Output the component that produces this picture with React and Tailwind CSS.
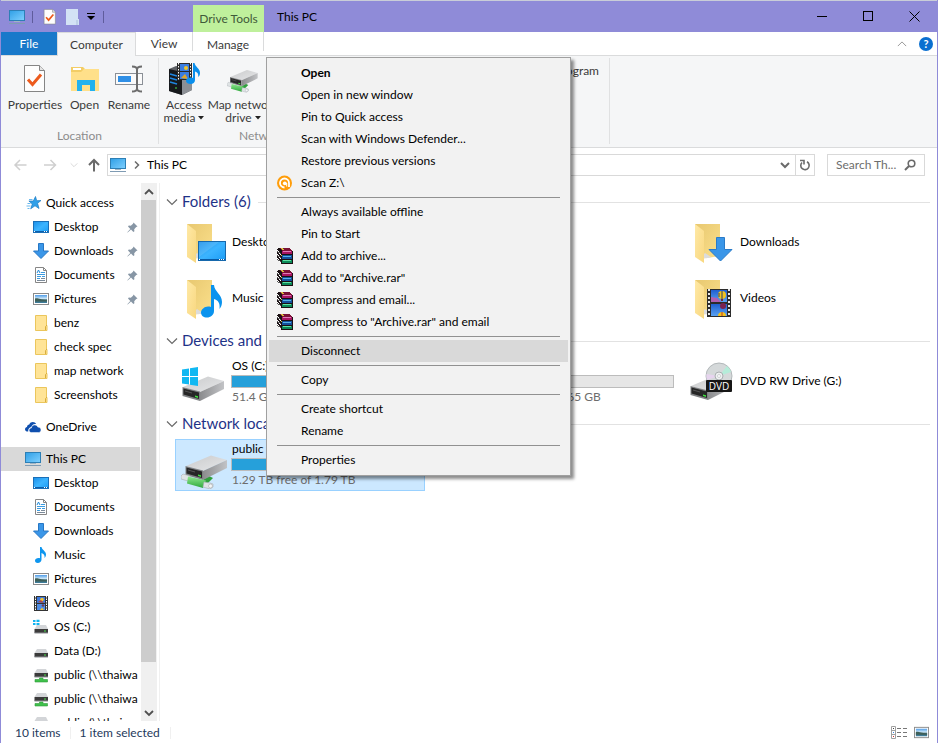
import React from "react";

const Defs = () => (
  <svg width="0" height="0" className="absolute" aria-hidden="true">
    <defs>
      <linearGradient id="screen" x1="0" y1="0" x2="1" y2="1">
        <stop offset="0" stopColor="#1a8fe8" />
        <stop offset="0.5" stopColor="#3cb4ff" />
        <stop offset="1" stopColor="#1b9cf5" />
      </linearGradient>
      <linearGradient id="monitor" x1="0" y1="0" x2="1" y2="1">
        <stop offset="0" stopColor="#2f9fe6" />
        <stop offset="1" stopColor="#7fd0ff" />
      </linearGradient>
      <linearGradient id="folderBack" x1="0" y1="0" x2="1" y2="1">
        <stop offset="0" stopColor="#e8c870" />
        <stop offset="1" stopColor="#fbe08c" />
      </linearGradient>
      <linearGradient id="folderFront" x1="0" y1="0" x2="1" y2="1">
        <stop offset="0" stopColor="#ffe9a6" />
        <stop offset="1" stopColor="#f8d77f" />
      </linearGradient>
      <linearGradient id="driveTop" x1="0" y1="0" x2="1" y2="1">
        <stop offset="0" stopColor="#c9cacb" />
        <stop offset="1" stopColor="#e6e7e9" />
      </linearGradient>
      <linearGradient id="driveSide" x1="0" y1="0" x2="1" y2="0">
        <stop offset="0" stopColor="#8b8c8e" />
        <stop offset="1" stopColor="#c2c3c6" />
      </linearGradient>
      <linearGradient id="sky" x1="0" y1="0" x2="0" y2="1">
        <stop offset="0" stopColor="#4f9ce8" />
        <stop offset="0.45" stopColor="#cfe8f7" />
        <stop offset="0.6" stopColor="#47707a" />
        <stop offset="1" stopColor="#3d7fa0" />
      </linearGradient>
      <linearGradient id="cable" x1="0" y1="0" x2="0" y2="1">
        <stop offset="0" stopColor="#8fe88f" />
        <stop offset="1" stopColor="#2fa83c" />
      </linearGradient>
      <linearGradient id="balloonSky" x1="0" y1="0" x2="0" y2="1">
        <stop offset="0" stopColor="#1f5fd0" />
        <stop offset="1" stopColor="#5aa2f2" />
      </linearGradient>
    </defs>
  </svg>
);

const MonitorIcon = ({ className = "w-4 h-4" }) => (
  <svg viewBox="0 0 16 16" className={`shrink-0 ${className}`}>
    <rect x="0.5" y="1.5" width="15" height="10" fill="url(#monitor)" stroke="#2d7fb5" />
    <path d="M5 12.500h6" stroke="#9fb4c4" />
    <path d="M0 14.500h16" stroke="#7f9bb3" />
  </svg>
);

const DesktopIcon = () => (
  <svg viewBox="0 0 16 16" className="w-4 h-4 shrink-0">
    <rect x="0.5" y="2.5" width="15" height="11" fill="url(#screen)" stroke="#1a6fb8" />
    <path d="M1 12.500h14" stroke="#0d5ea8" />
    <path d="M1 12.500h1M11 12.500h1M13 12.500h1" stroke="#ffffff" />
  </svg>
);

const DownloadIcon = () => (
  <svg viewBox="0 0 16 16" className="w-4 h-4 shrink-0">
    <path d="M5.500 .5h5V8h5L8 15.500L.5 8h5z" fill="#3a96e8" stroke="#2777c4" />
  </svg>
);

const DocumentIcon = () => (
  <svg viewBox="0 0 16 16" className="w-4 h-4 shrink-0">
    <path d="M2.500 .5h8l3 3v12h-11z" fill="#ffffff" stroke="#868686" />
    <path d="M10.500 .5v3h3" fill="none" stroke="#868686" />
    <path d="M4 6l1.500-3L7 6" fill="none" stroke="#1e88d8" />
    <path d="M8 5.500h4M4 7.500h8M4 9.500h4M9 9.500h3M4 11.500h3" stroke="#3c9be0" />
    <path d="M8 11.500h4M4 13.500h8" stroke="#7b8a99" />
  </svg>
);

const PictureIcon = ({ className = "w-4 h-4" }) => (
  <svg viewBox="0 0 16 16" className={`shrink-0 ${className}`}>
    <rect x="0.5" y="2.5" width="15" height="11" fill="#ffffff" stroke="#8a8a8a" />
    <rect x="2" y="4" width="12" height="8" fill="url(#sky)" />
    <path d="M2 7.500c3-1 5 1.500 12 1.500v1.500H2z" fill="#3e5f58" />
  </svg>
);

const FolderIcon = () => (
  <svg viewBox="0 0 16 16" className="w-4 h-4 shrink-0">
    <path d="M2.500 .5h11v10h.5v5H2.500z" fill="#ffe497" stroke="#ebc65c" />
    <path d="M12.500 15v-3.500l1.500-1.500" fill="none" stroke="#d9ae3e" />
  </svg>
);

const MusicIcon = () => (
  <svg viewBox="0 0 16 16" className="w-4 h-4 shrink-0">
    <path
      d="M7 0h1.500c.5 3 4.500 4 4.500 7.500 0 1.500-.6 2.700-1.500 3.500.6-2.800-.8-4.300-3-5v6.500c0 2-1.700 3.500-3.700 3.500S2 15 2 13.500 3.700 11 5.500 11c.6 0 1.100.1 1.500.3z"
      fill="#0e96ef"
    />
  </svg>
);

const VideoIcon = () => (
  <svg viewBox="0 0 16 16" className="w-4 h-4 shrink-0">
    <rect x="1" y="1" width="14" height="15" fill="#333333" />
    <path d="M2.500 1v15M13.500 1v15" stroke="#ffffff" strokeDasharray="1.500 1" />
    <rect x="4" y="2" width="8" height="6" fill="#3d78dc" />
    <rect x="4" y="9" width="8" height="6" fill="#4f8ee6" />
    <circle cx="9" cy="4.500" r="1.800" fill="#f1c232" />
    <path d="M5 7l3-2 3 3z" fill="#b8443c" />
    <circle cx="10" cy="10.500" r="1.300" fill="#6b3d5a" />
    <path d="M7 15l2-2.500 2 2.500z" fill="#f1c232" />
  </svg>
);

const DriveIcon = ({ windows, network }) => (
  <svg viewBox="0 0 16 16" className="w-4 h-4 shrink-0">
    {windows && (
      <path d="M0 1h2.500v2H0zM3.500 .8h3V3h-3zM0 4h2.500v2H0zM3.500 4h3v2.200h-3z" fill="#12b4f0" />
    )}
    <g transform={network ? "translate(0 -3)" : "translate(0 1)"}>
      <path d="M4 5h9l2 4H1.500z" fill="#d3d5d8" />
      <rect x="1.500" y="9" width="13.500" height="4" fill="#3b3b3b" />
      <rect x="1.500" y="12.500" width="13.500" height="1" fill="#8d9093" />
      <rect x="11" y="10.500" width="2" height="1" fill="#4be04b" />
    </g>
    {network && (
      <path d="M6.500 11h3.500v1.500h4.500v2.500H2v-2.500h4.500z" fill="#3fc04b" stroke="#2f9a3a" strokeWidth="0.600" />
    )}
  </svg>
);

const StarIcon = () => (
  <svg viewBox="0 0 16 16" className="w-4 h-4 shrink-0">
    <path
      d="M9.500 1.500l1.200 4.200 4.300-.2-3.400 2.800 1.400 5.200-4-2.700-4.300 3 1.600-4.800-3.400-3h4.400z"
      fill="#2f9fe8"
      stroke="#1c7cc4"
      strokeWidth="0.700"
    />
    <path d="M3 4.500h3.500M1.500 8.500h3M.5 11h4M1.500 13.500h2" stroke="#6ab9ee" />
  </svg>
);

const CloudIcon = () => (
  <svg viewBox="0 0 16 16" className="w-4 h-4 shrink-0">
    <path
      d="M3.200 12.500H2.800C1.300 12.500 0 11.600 0 10.200 0 9 .9 8.200 2 8c0-1.500 1-2.500 2.300-2.600C5 3.700 6.300 3 7.800 3c1.600 0 2.700.8 3.400 2.100-2.600-.3-4.200 1-4.800 2.900-2 .2-3.300 1.700-3.200 4.500z"
      fill="#0f4fae"
    />
    <path
      d="M6.300 13.500c-1.300 0-2.200-.9-2.200-2.200 0-1.300.9-2.200 2.300-2.300.2-1.900 1.500-3.100 3.300-3.100 1.500 0 2.600.8 3.100 2.200 1.800 0 3.200 1.200 3.200 2.800 0 1.500-1.100 2.600-2.600 2.600z"
      fill="#0f4fae"
      stroke="#ffffff"
      strokeWidth="0.500"
    />
  </svg>
);

const PinIcon = () => (
  <svg viewBox="0 0 11 11" className="w-[11px] h-[11px] shrink-0">
    <path
      d="M6.500 .5l4 4-1.300.5-2 2.300.2 2-1 .7L4 7.600.7 10.600l-.4-.3L3.300 7 1 4.600l.8-1 2 .2L6 1.800z"
      fill="#8796a5"
    />
  </svg>
);

const RarIcon = () => (
  <svg viewBox="0 0 16 16" shapeRendering="crispEdges" className="w-4 h-4 shrink-0">
    <path d="M1 0h11l4 3v12l-1 1H5l-5-4V1z" fill="#1a1013" />
    <path d="M0 2l4 3v2L0 4zM0 6l4 3v2L0 8zM0 10l4 3v2l-4-3z" fill="#ffffff" />
    <path d="M0 3l4 3M0 7l4 3M0 11l4 3" stroke="#555555" strokeDasharray="1 1" />
    <path d="M2 0h10l3 3H5z" fill="#7a1236" />
    <rect x="5" y="3" width="10" height="3" fill="#a81562" />
    <rect x="6" y="3" width="8" height="1" fill="#e07ab8" />
    <rect x="5" y="7" width="10" height="4" fill="#14509c" />
    <rect x="6" y="8" width="8" height="1" fill="#53b4e8" />
    <rect x="5" y="12" width="10" height="3" fill="#0c8a58" />
    <rect x="6" y="12" width="8" height="1" fill="#5fe0a4" />
    <path d="M4 0h2v1H4zM5 1h2v1H5zM4 7h1v1H4z" fill="#d8c53a" />
  </svg>
);

const ScanIcon = () => (
  <svg viewBox="0 0 16 16" className="w-4 h-4 shrink-0">
    <circle cx="7.500" cy="8" r="7.500" fill="#ff9d0a" />
    <path
      d="M7.500 12.500A4.500 4.500 0 1 1 12 8v4"
      fill="none"
      stroke="#ffffff"
      strokeWidth="1.800"
    />
    <circle cx="7.800" cy="8.300" r="1.900" fill="#ffffff" />
    <path d="M9.700 8v3.500" stroke="#ffffff" />
  </svg>
);

const BigFolder = ({ children }) => (
  <svg viewBox="0 0 48 48" className="w-12 h-12 shrink-0">
    <path d="M6 6h25v32l-20 3z" fill="url(#folderBack)" />
    <path d="M12 39c5 2 8 1 10 0l-6-4z" fill="#dcdcdc" />
    <path d="M6 6l9 7v32l-9-6z" fill="url(#folderFront)" />
    {children}
  </svg>
);

const BigDesktop = () => (
  <BigFolder>
    <rect x="17.500" y="23.500" width="27" height="19" fill="url(#screen)" stroke="#1668ac" />
    <path d="M18 41.500h26" stroke="#0a5ba5" />
    <path d="M18 41.500h1M38 41.500h1M40 41.500h1M42 41.500h1" stroke="#ffffff" />
    <path d="M18 39V24h20z" fill="#ffffff" opacity="0.120" />
  </BigFolder>
);

const BigMusic = () => (
  <BigFolder>
    <path
      d="M30 11h3c.5 7 8 9 8 17 0 3-1 5-2.500 7 .8-6-1.500-9-5.500-10v12c0 4-3.500 6.500-7 6.500S20 41.500 20 38.500s3.500-6 7-6c1 0 2 .1 3 .5z"
      fill="#0a93ee"
    />
  </BigFolder>
);

const BigDownload = () => (
  <BigFolder>
    <path d="M27.500 19.500h8v12h7.500L31.500 43 20 31.500h7.500z" fill="#3a96e8" stroke="#2a7bc8" />
  </BigFolder>
);

const BigVideo = () => (
  <BigFolder>
    <rect x="18" y="15" width="24" height="28" fill="#2c2c2c" />
    <path d="M20 15v28M40 15v28" stroke="#e8e8e8" strokeWidth="2" strokeDasharray="2 2" />
    <rect x="22" y="16" width="16" height="12" fill="url(#balloonSky)" />
    <rect x="22" y="30" width="16" height="12" fill="url(#balloonSky)" />
    <path d="M22 23l6 1 4 4H22z" fill="#b25fb0" />
    <ellipse cx="33" cy="21" rx="4" ry="4" fill="#f2c21d" />
    <path d="M33 17v8M30 19v4" stroke="#27406e" />
    <path d="M32 25h2v2h-2z" fill="#7a2a2a" />
    <ellipse cx="34" cy="32" rx="3" ry="3" fill="#7a2350" />
    <path d="M29 42c0-3 2-4 4-4s4 1 4 4z" fill="#f2c21d" />
    <path d="M33 38v4" stroke="#c0392b" />
  </BigFolder>
);

const DriveBody = () => (
  <>
    <path d="M2 29l25-10.500 16 4.500L19 34z" fill="url(#driveTop)" />
    <path d="M19 34l24-11v8L19 43z" fill="url(#driveSide)" />
    <path d="M1.500 29L19 33.500V43L1.500 38z" fill="#7f8183" />
    <path d="M2.500 30.500L18 34.500v6.500L2.500 36.500z" fill="#262626" />
    <path d="M14 37.500l3 .8v1.600l-3-.8z" fill="#3fe03f" />
    <path d="M4 33l7 2" stroke="#555555" />
  </>
);

const WindowsDrive = () => (
  <svg viewBox="0 0 48 48" className="w-12 h-12 shrink-0">
    <DriveBody />
    <path d="M1 11.500l7-1v7.500H1zM9 10.300l8-1.300v9H9zM1 19h7v7.500l-7-1zM9 19h8v9l-8-1.300z" fill="#10b8f2" />
  </svg>
);

const NetworkDrive = ({ className = "w-12 h-12", viewBox = "0 0 48 48" }) => (
  <svg viewBox={viewBox} className={`shrink-0 ${className}`}>
    <path d="M20 40l8-5 4 2-6 6z" fill="#2f9f3c" />
    <g transform="translate(3 -4)">
      <DriveBody />
    </g>
    <path d="M0 35l2-2 7 2v4l-2 1-7-2z" fill="#dfe3e5" stroke="#a7adb2" strokeWidth="0.600" />
    <path d="M7 35.500l18 4-3 7.500-16-4.500z" fill="url(#cable)" />
    <path d="M23 41l6 1 3 1v3l-3 2-7-2z" fill="#dfe3e5" stroke="#a7adb2" strokeWidth="0.600" />
    <circle cx="29.500" cy="45" r="2" fill="#f4f6f7" stroke="#a7adb2" strokeWidth="0.600" />
  </svg>
);

const DvdDrive = () => (
  <svg viewBox="0 0 48 48" className="w-12 h-12 shrink-0">
    <DriveBody />
    <circle cx="30" cy="19" r="13" fill="#d5d9da" stroke="#b3b8ba" />
    <path d="M30 19l8-10a13 13 0 0 1 4 6z" fill="#b5ecd9" />
    <path d="M30 19L18 23a13 13 0 0 1-.5-6z" fill="#e6d4ee" />
    <circle cx="30" cy="19" r="4" fill="#eef0f1" stroke="#a9aeb0" />
    <circle cx="30" cy="19" r="1.500" fill="#ffffff" stroke="#a9aeb0" strokeWidth="0.500" />
    <rect x="17" y="23" width="26" height="12" rx="1" fill="#161616" />
    <text x="30" y="33" textAnchor="middle" fontSize="10" fill="#ffffff" className="font-['Open_Sans',sans-serif]">
      DVD
    </text>
  </svg>
);

const PropertiesIcon = ({ className }) => (
  <svg viewBox="0 0 32 32" className={`shrink-0 ${className}`}>
    <path d="M5.500 2.500h15l5 5v21h-20z" fill="#fdfdfd" stroke="#858585" />
    <path d="M20.500 2.500v5h5" fill="#e4e4e4" stroke="#858585" />
    <path d="M9 16.500l4.500 5L22 11.500" fill="none" stroke="#ec5a1c" strokeWidth="3" />
  </svg>
);

const OpenIcon = () => (
  <svg viewBox="0 0 32 32" className="w-8 h-8">
    <path d="M2 4h12l2 2h14v22H2z" fill="#f3cd66" />
    <rect x="4" y="5" width="8" height="2" fill="#ffffff" />
    <path d="M2 9h10l3-3h15v22H2z" fill="#ffe08a" />
    <path d="M8 28V17h18v11h-5v-6h-8v6z" fill="#22b2ee" />
  </svg>
);

const RenameIcon = () => (
  <svg viewBox="0 0 32 32" className="w-8 h-8">
    <rect x="2.500" y="10.500" width="27" height="11" fill="#fafafa" stroke="#8a8f96" />
    <rect x="5" y="13" width="13" height="6" fill="#2f8fe6" />
    <path
      d="M19 3.500c3 0 5 1 5 3v19c0 2-2 3-5 3M29 3.500c-3 0-5 1-5 3M29 28.500c-3 0-5-1-5-3"
      fill="none"
      stroke="#6d6d6d"
      strokeWidth="2"
    />
  </svg>
);

const MediaIcon = () => (
  <svg viewBox="0 0 32 32" className="w-8 h-8">
    <path d="M1 6l7-3 16 3v21l-10 5L1 28z" fill="#5e6166" />
    <path d="M1 6l13 3v23L1 28z" fill="#17191c" />
    <path d="M14 9l10-3v21l-10 5z" fill="#8c9096" />
    <path d="M2 11l7 2M2 15l7 2M2 19l7 2" stroke="#1f86e0" strokeWidth="1.500" />
    <path d="M7 25h2" stroke="#4be04b" />
    <rect x="9" y="0" width="15" height="17" fill="#2a2a2a" />
    <path d="M10.500 0v17M22.500 0v17" stroke="#ffffff" strokeDasharray="1.500 1.500" />
    <rect x="12" y="1" width="9" height="7" fill="#3a7de0" />
    <rect x="12" y="9" width="9" height="7" fill="#3a7de0" />
    <circle cx="18" cy="5" r="2" fill="#f0c428" />
    <path d="M13 15l4-4 3 5z" fill="#e0a62a" />
    <path
      d="M25 0h1.500c.5 4 5.500 5 5.500 10 0 2-.7 3-1.800 4 .5-3-.7-5-3.200-5.500V17c0 2.500-2 4-4.300 4S18 20 18 18s2-3.500 4.500-3.500c1 0 1.800.1 2.500.4z"
      fill="#0a8fec"
    />
  </svg>
);

const Chevron = ({ className }) => (
  <svg viewBox="0 0 12 12" className={`shrink-0 ${className}`}>
    <path d="M1 3.500l5 5 5-5" fill="none" stroke="currentColor" strokeWidth="1.200" />
  </svg>
);

const Caret = () => (
  <svg viewBox="0 0 6 4" className="w-[6px] h-1 inline-block ml-[3px] mb-[2px]">
    <path d="M0 0h6L3 3.500z" fill="#222222" />
  </svg>
);

const quickAccess = [
  { name: "Desktop", icon: <DesktopIcon />, pinned: true },
  { name: "Downloads", icon: <DownloadIcon />, pinned: true },
  { name: "Documents", icon: <DocumentIcon />, pinned: true },
  { name: "Pictures", icon: <PictureIcon />, pinned: true },
  { name: "benz", icon: <FolderIcon /> },
  { name: "check spec", icon: <FolderIcon /> },
  { name: "map network", icon: <FolderIcon /> },
  { name: "Screenshots", icon: <FolderIcon /> },
];

const thisPc = [
  { name: "Desktop", icon: <DesktopIcon /> },
  { name: "Documents", icon: <DocumentIcon /> },
  { name: "Downloads", icon: <DownloadIcon /> },
  { name: "Music", icon: <MusicIcon /> },
  { name: "Pictures", icon: <PictureIcon /> },
  { name: "Videos", icon: <VideoIcon /> },
  { name: "OS (C:)", icon: <DriveIcon windows /> },
  { name: "Data (D:)", icon: <DriveIcon /> },
  { name: "public (\\\\thaiwa", icon: <DriveIcon network /> },
  { name: "public (\\\\thaiwa", icon: <DriveIcon network /> },
  { name: "public (\\\\thaiwa", icon: <DriveIcon network /> },
];

const menuGroups = [
  [
    { label: "Open", bold: true },
    { label: "Open in new window" },
    { label: "Pin to Quick access" },
    { label: "Scan with Windows Defender..." },
    { label: "Restore previous versions" },
    { label: "Scan Z:\\", icon: <ScanIcon /> },
  ],
  [
    { label: "Always available offline" },
    { label: "Pin to Start" },
    { label: "Add to archive...", icon: <RarIcon /> },
    { label: 'Add to "Archive.rar"', icon: <RarIcon /> },
    { label: "Compress and email...", icon: <RarIcon /> },
    { label: 'Compress to "Archive.rar" and email', icon: <RarIcon /> },
  ],
  [{ label: "Disconnect", active: true }],
  [{ label: "Copy" }],
  [{ label: "Create shortcut" }, { label: "Rename" }],
  [{ label: "Properties" }],
];

const TitleBar = () => (
  <header className="flex h-8 border-t border-[#c9cdd8] bg-[#8f8bd8]">
    <div className="flex w-48 items-center pl-2">
      <MonitorIcon />
      <span className="ml-[7px] h-3 w-px bg-[#5f5c9c]" />
      <button type="button" aria-label="Properties" className="ml-2">
        <PropertiesIcon className="w-[18px] h-[18px]" />
      </button>
      <button type="button" aria-label="New folder" className="ml-[6px]">
        <svg viewBox="0 0 14 16" className="w-[14px] h-4">
          <path d="M1 0h12v10h1v6H1z" fill="#d3e2f5" />
          <path d="M12 11v5" stroke="#aabfda" />
        </svg>
      </button>
      <button type="button" aria-label="Customize Quick Access Toolbar" className="ml-2">
        <svg viewBox="0 0 8 7" className="w-2 h-[7px]">
          <path d="M0 .5h8" stroke="#000000" />
          <path d="M0 3h8L4 7z" fill="#000000" />
        </svg>
      </button>
      <span className="ml-2 h-3 w-px bg-[#5f5c9c]" />
    </div>
    <div className="mt-1 flex w-[71px] items-center justify-center bg-[#bff09c] text-[#3f5a3a]">
      Drive Tools
    </div>
    <h1 className="ml-[13px] flex items-center text-black">This PC</h1>
    <div className="ml-auto flex">
      <button type="button" aria-label="Minimize" className="flex w-[46px] items-center justify-center">
        <svg viewBox="0 0 11 11" className="w-[11px] h-[11px]">
          <path d="M0 5.500h10" stroke="#000000" />
        </svg>
      </button>
      <button type="button" aria-label="Maximize" className="flex w-[46px] items-center justify-center">
        <svg viewBox="0 0 11 11" className="w-[11px] h-[11px]">
          <rect x="0.500" y="0.500" width="9" height="9" fill="none" stroke="#000000" />
        </svg>
      </button>
      <button type="button" aria-label="Close" className="flex w-[46px] items-center justify-center">
        <svg viewBox="0 0 11 11" className="w-[11px] h-[11px]">
          <path d="M.5 .5l10 10M10.500 .5l-10 10" stroke="#000000" />
        </svg>
      </button>
    </div>
  </header>
);

const Tabs = () => (
  <div className="flex h-6 border-b border-[#dadbdc] bg-white text-[#3b3b3b]">
    <button type="button" className="w-14 bg-[#1979ca] text-white">File</button>
    <button type="button" className="-mb-px w-[79px] border-x border-t border-[#dadbdc] bg-[#f5f6f7]">
      Computer
    </button>
    <button type="button" className="w-14">View</button>
    <button type="button" className="mb-1 w-[72px] border-x border-[#dadbdc] pt-1">Manage</button>
    <div className="ml-auto flex items-center gap-3 pr-1">
      <button type="button" aria-label="Minimize the Ribbon" className="text-[#9a9a9a]">
        <Chevron className="w-[10px] h-[10px] rotate-180" />
      </button>
      <button
        type="button"
        aria-label="Help"
        className="flex h-[14px] w-[14px] items-center justify-center rounded-full bg-[#0a6fd0] text-[11px] leading-none font-bold text-white"
      >
        ?
      </button>
    </div>
  </div>
);

const RibbonButton = ({ icon, width, children }) => (
  <button type="button" className={`flex shrink-0 flex-col items-center leading-[13px] ${width}`}>
    {icon}
    <span className="mt-[3px] whitespace-nowrap">{children}</span>
  </button>
);

const Ribbon = () => (
  <div className="flex h-[92px] border-b border-[#dadbdc] bg-[#f5f6f7] pt-[2px] pb-[3px] text-[#3b3b3b]">
    <div className="flex w-[158px] flex-col border-r border-[#e0e1e2] px-1 pt-[5px]">
      <div className="flex h-[68px]">
        <RibbonButton width="w-[60px]" icon={<PropertiesIcon className="w-8 h-8" />}>Properties</RibbonButton>
        <RibbonButton width="w-[39px]" icon={<OpenIcon />}>Open</RibbonButton>
        <RibbonButton width="w-[50px]" icon={<RenameIcon />}>Rename</RibbonButton>
      </div>
      <div className="text-center leading-4 text-[#8c8c8c]">Location</div>
    </div>
    <div className="flex w-[207px] flex-col border-r border-[#e0e1e2] px-[2px] pt-[5px]">
      <div className="flex h-[68px]">
        <RibbonButton width="w-[46px]" icon={<MediaIcon />}>
          Access
          <br />
          media
          <Caret />
        </RibbonButton>
        <RibbonButton
          width="w-[72px]"
          icon={<NetworkDrive viewBox="0 4 48 48" className="w-8 h-8" />}
        >
          Map network
          <br />
          drive
          <Caret />
        </RibbonButton>
      </div>
      <div className="text-center leading-4 text-[#8c8c8c]">Network</div>
    </div>
    <div className="flex w-[244px] flex-col border-r border-[#e0e1e2] pt-[5px] pr-[10px]">
      <button type="button" className="self-end leading-4">Uninstall or change a program</button>
    </div>
  </div>
);

const AddressBar = () => (
  <div className="flex items-center pt-[6px] pr-3 pb-[7px] pl-3">
    <button type="button" aria-label="Back" className="text-[#cfcfcf]">
      <svg viewBox="0 0 14 12" className="w-[14px] h-3">
        <path d="M13.500 6H2M7 1L2 6l5 5" fill="none" stroke="currentColor" strokeWidth="1.500" />
      </svg>
    </button>
    <button type="button" aria-label="Forward" className="ml-4 text-[#cfcfcf]">
      <svg viewBox="0 0 14 12" className="w-[14px] h-3">
        <path d="M1 6h11.500M7.500 1l5 5-5 5" fill="none" stroke="currentColor" strokeWidth="1.500" />
      </svg>
    </button>
    <button type="button" aria-label="Recent locations" className="ml-[13px] text-[#cfcfcf]">
      <Chevron className="w-2 h-2" />
    </button>
    <button type="button" aria-label="Up" className="ml-[9px] text-[#6a6a6a]">
      <svg viewBox="0 0 14 14" className="w-[14px] h-[14px]">
        <path d="M7 13.500V2M2 7l5-5 5 5" fill="none" stroke="currentColor" strokeWidth="2" />
      </svg>
    </button>
    <div className="ml-[6px] flex h-[22px] flex-1 items-center border border-[#d9d9d9] pl-[2px]">
      <MonitorIcon />
      <svg viewBox="0 0 6 8" className="ml-2 h-2 w-[6px]">
        <path d="M1 .5L4.500 4 1 7.500" fill="none" stroke="#6a6a6a" strokeWidth="1.500" />
      </svg>
      <span className="ml-[7px]">This PC</span>
      <button type="button" aria-label="Previous locations" className="mr-[5px] ml-auto text-[#6a6a6a]">
        <svg viewBox="0 0 10 8" className="h-2 w-[10px]">
          <path d="M1 2l4 4 4-4" fill="none" stroke="currentColor" strokeWidth="2" />
        </svg>
      </button>
      <button
        type="button"
        aria-label="Refresh"
        className="flex h-full w-[19px] items-center justify-center border-l border-[#d9d9d9] text-[#6a6a6a]"
      >
        <svg viewBox="0 0 12 12" className="h-3 w-3">
          <path d="M8 2.800A4.200 4.200 0 1 1 3 3.500M1 1.500h4v4" fill="none" stroke="currentColor" strokeWidth="1.600" />
        </svg>
      </button>
    </div>
    <label className="ml-3 flex h-[22px] w-[98px] items-center border border-[#d9d9d9] pr-2 pl-2">
      <input
        type="text"
        aria-label="Search This PC"
        placeholder="Search Th..."
        className="w-full min-w-0 outline-none placeholder:text-[#6d6d6d]"
      />
      <svg viewBox="0 0 12 12" className="h-3 w-3 shrink-0">
        <circle cx="7.500" cy="4.500" r="3.300" fill="none" stroke="#6a6a6a" strokeWidth="1.600" />
        <path d="M5 7L1 11" stroke="#6a6a6a" strokeWidth="2" />
      </svg>
    </label>
  </div>
);

const TreeItem = ({ name, icon, pinned }) => (
  <li className="flex h-6 items-center pl-8">
    {icon}
    <span className="ml-[5px] flex-1 whitespace-nowrap">{name}</span>
    {pinned && <PinIcon />}
  </li>
);

const Sidebar = () => (
  <aside className="flex w-[159px] shrink-0 border-r border-[#f0f0f0]">
    <nav className="w-[139px] overflow-hidden pt-2">
      <div className="flex h-6 items-center pl-[25px]">
        <StarIcon />
        <span className="ml-1">Quick access</span>
      </div>
      <ul className="pr-[2px]">
        {quickAccess.map((item) => (
          <TreeItem key={item.name} {...item} />
        ))}
      </ul>
      <div className="mt-2 flex h-6 items-center pl-6">
        <CloudIcon />
        <span className="ml-[5px]">OneDrive</span>
      </div>
      <div className="mt-2 flex h-6 items-center bg-[#d9d9d9] pl-6">
        <MonitorIcon />
        <span className="ml-[5px]">This PC</span>
      </div>
      <ul>
        {thisPc.map((item, i) => (
          <TreeItem key={i} {...item} />
        ))}
      </ul>
    </nav>
    <div className="ml-px flex w-4 flex-col items-center bg-[#f0f0f0] text-[#505050]">
      <div className="flex h-[17px] items-center">
        <svg viewBox="0 0 10 8" className="h-2 w-[10px]">
          <path d="M1 6l4-4 4 4" fill="none" stroke="currentColor" strokeWidth="1.800" />
        </svg>
      </div>
      <div className="mr-px w-[15px] flex-1 bg-[#cdcdcd]" />
      <div className="flex h-[59px] items-end pb-1">
        <svg viewBox="0 0 10 8" className="h-2 w-[10px]">
          <path d="M1 2l4 4 4-4" fill="none" stroke="currentColor" strokeWidth="1.800" />
        </svg>
      </div>
    </div>
  </aside>
);

const Section = ({ title, children }) => (
  <section className="mb-1">
    <h2 className="mb-[3px] flex h-6 items-center text-[15px] text-[#1e3287]">
      <Chevron className="w-3 h-3 text-[#6a6a6a]" />
      <span className="ml-1 pb-[2px] whitespace-nowrap">{title}</span>
      <span className="ml-[7px] h-px flex-1 bg-[#e2e2e2]" />
    </h2>
    <div className="ml-[9px] grid grid-cols-[repeat(3,250px)] gap-1">{children}</div>
  </section>
);

const Tile = ({ icon, name, used, detail, selected }) => (
  <div
    className={`flex h-[52px] items-center border pl-[5px] ${
      selected ? "border-[#99d1ff] bg-[#cce8ff]" : "border-transparent"
    } ${used === undefined ? "pb-[2px]" : ""}`}
  >
    {icon}
    <div className="ml-[2px] w-[189px]">
      <div className="pl-px leading-[14px]">{name}</div>
      {used !== undefined && (
        <>
          <div className="mt-[2px] h-[13px] border border-[#bcbcbc] bg-[#e6e6e6]">
            <div className="h-full bg-[#26a0da]" style={{ width: `${used}%` }} />
          </div>
          <div className="mt-px pl-px leading-4 text-[#6d6d6d]">{detail}</div>
        </>
      )}
    </div>
  </div>
);

const ContextMenu = () => (
  <div
    role="menu"
    className="absolute top-[57px] left-[265px] w-[305px] border border-[#a0a0a0] bg-[#f2f2f2] px-[2px] py-1 shadow-[3px_3px_3px_rgba(0,0,0,0.45)]"
  >
    {menuGroups.map((group, i) => (
      <div key={i}>
        {i > 0 && <div className="mx-2 my-[3px] h-px bg-[#919191]" />}
        {group.map((item) => (
          <button
            key={item.label}
            type="button"
            role="menuitem"
            className={`flex h-[22px] w-full items-center pl-2 ${item.active ? "bg-[#d9d9d9]" : ""} ${
              item.bold ? "font-bold" : ""
            }`}
          >
            <span className="mr-2 flex w-4">{item.icon}</span>
            {item.label}
          </button>
        ))}
      </div>
    ))}
  </div>
);

const StatusBar = () => (
  <footer className="z-10 flex h-[22px] items-center bg-white pt-px pr-2 pl-[14px] text-[#1e395b]">
    <span>10 items</span>
    <span className="mx-[9px] h-3 w-px bg-[#f0f0f0]" />
    <span>1 item selected</span>
    <span className="ml-[10px] h-3 w-px bg-[#f0f0f0]" />
    <div className="ml-auto flex items-center gap-[6px]">
      <button type="button" aria-label="Details view">
        <svg viewBox="0 0 17 13" className="h-[13px] w-[17px]">
          <path d="M.5 .5h4v12h-4zM.5 4.500h4M.5 8.500h4" fill="#ffffff" stroke="#a0a0a0" />
          <path d="M2 2.500h1" stroke="#444444" />
          <path d="M2 6.500h1" stroke="#3a86e0" />
          <path d="M2 10.500h1" stroke="#d03030" />
          <path d="M6 2.500h4M12 2.500h4M6 6.500h4M12 6.500h4M6 10.500h4M12 10.500h4" stroke="#777777" />
        </svg>
      </button>
      <button type="button" aria-label="Large icons view">
        <PictureIcon className="w-[15px] h-[15px]" />
      </button>
    </div>
  </footer>
);

const App = () => {
  return (
    <div className="relative flex h-screen flex-col overflow-hidden border-x border-[#8f8bd8] bg-white font-['Lato','Open_Sans',sans-serif] text-[12px] text-black">
      <Defs />
      <TitleBar />
      <Tabs />
      <Ribbon />
      <AddressBar />
      <div className="flex min-h-0 flex-1">
        <Sidebar />
        <main className="min-w-0 flex-1 overflow-hidden pt-[7px] pr-[7px] pl-[6px]">
          <Section title="Folders (6)">
            <Tile icon={<BigDesktop />} name="Desktop" />
            <Tile icon={<BigFolder />} name="Documents" />
            <Tile icon={<BigDownload />} name="Downloads" />
            <Tile icon={<BigMusic />} name="Music" />
            <Tile icon={<BigFolder />} name="Pictures" />
            <Tile icon={<BigVideo />} name="Videos" />
          </Section>
          <Section title="Devices and drives (3)">
            <Tile icon={<WindowsDrive />} name="OS (C:)" used={78} detail="51.4 GB free of 237 GB" />
            <Tile icon={<WindowsDrive />} name="Data (D:)" used={30} detail="61 GB free of 465 GB" />
            <Tile icon={<DvdDrive />} name="DVD RW Drive (G:)" />
          </Section>
          <Section title="Network locations (1)">
            <Tile
              icon={<NetworkDrive />}
              name="public (\\thaiware) (Z:)"
              used={28}
              detail="1.29 TB free of 1.79 TB"
              selected
            />
          </Section>
        </main>
      </div>
      <StatusBar />
      <ContextMenu />
    </div>
  );
};

export default App;
